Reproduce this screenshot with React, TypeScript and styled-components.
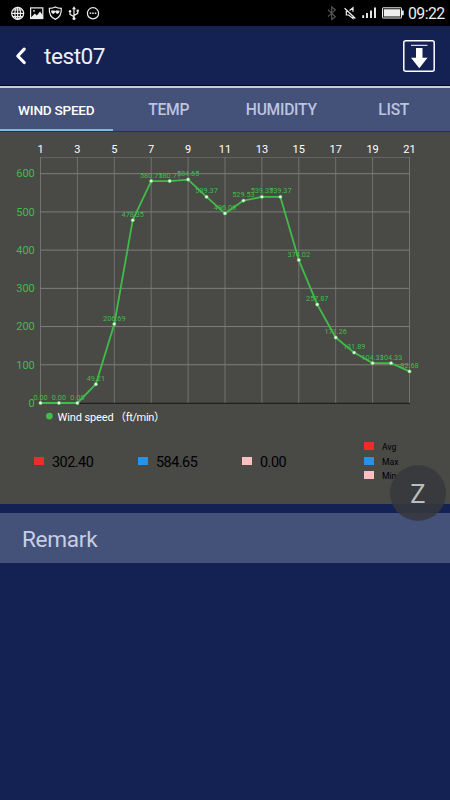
import React from 'react';
import styled, { createGlobalStyle } from 'styled-components';

const GlobalStyle = createGlobalStyle`
  * { box-sizing: border-box; }
  body { margin: 0; background: #142153; font-family: Roboto, sans-serif; }
`;

const Screen = styled.main`
  width: 450px;
  height: 800px;
  display: flex;
  flex-direction: column;
  overflow: hidden;
  background: #142153;
`;

const StatusBar = styled.div`
  height: 26px;
  flex: none;
  display: flex;
  align-items: center;
  justify-content: space-between;
  background: #000;
  color: #eee;
  padding: 0 7px 0 10px;
`;

const StatusGroup = styled.div<{ $gap: number }>`
  display: flex;
  align-items: center;
  gap: ${(p) => p.$gap}px;
  svg { display: block; }
`;

const Clock = styled.span`
  font-size: 15.8px;
  letter-spacing: -0.55px;
  line-height: 26px;
  padding-top: 1px;
  width: 35px;
  color: #eee;
  white-space: nowrap;
`;

const Header = styled.header`
  height: 60px;
  flex: none;
  display: flex;
  align-items: center;
  padding: 0 15px 0 14px;
  border-bottom: 1px solid #050812;
`;

const Title = styled.h1`
  flex: 1;
  margin: 3px 0 0 16px;
  font-size: 22.6px;
  letter-spacing: -0.45px;
  line-height: 30px;
  font-weight: 400;
  color: #eef0f8;
`;

const IconButton = styled.button`
  border: 0;
  padding: 0;
  background: none;
  svg { display: block; }
`;

const Tabs = styled.nav`
  display: grid;
  grid-template-columns: repeat(4, 1fr);
  flex: none;
  height: 46px;
  background: #445179;
  border-top: 2px solid #c9cde0;
  border-bottom: 1px solid #26305b;
`;

const Tab = styled.button<{ $active?: boolean }>`
  border: 0;
  border-bottom: 2px solid ${(p) => (p.$active ? '#7fbdd2' : 'transparent')};
  padding: 3px 0 0;
  background: none;
  font-family: inherit;
  font-weight: 500;
  font-size: ${(p) => (p.$active ? 13.6 : 15.6)}px;
  letter-spacing: ${(p) => (p.$active ? -0.25 : -0.25)}px;
  color: ${(p) => (p.$active ? '#fff' : '#bcc4df')};
  white-space: nowrap;
`;

const Panel = styled.section`
  height: 372px;
  flex: none;
  background: #494946;
`;

const ChartSvg = styled.svg`
  display: block;
  font-family: Roboto, sans-serif;
`;

const Summary = styled.div`
  display: grid;
  grid-template-columns: 104px 104px 122px 1fr;
  align-items: start;
  padding: 13px 0 0 34px;
  height: 70px;
`;

const Stat = styled.div`
  display: flex;
  align-items: center;
  height: 30px;
  margin-top: 7px;
  gap: 8px;
  font-size: 14.4px;
  letter-spacing: -0.5px;
  color: #000;
`;

const Swatch = styled.i<{ $color: string }>`
  width: 10px;
  height: 8px;
  flex: none;
  margin-top: -2px;
  background: ${(p) => p.$color};
`;

const Key = styled.div`
  display: flex;
  flex-direction: column;
`;

const KeyRow = styled.div`
  display: flex;
  align-items: center;
  height: 14.5px;
  gap: 8px;
  font-size: 8.6px;
  color: #000;
`;

const Remark = styled.section`
  flex: none;
  height: 50px;
  margin-top: 9px;
  padding: 2px 22px 0;
  display: flex;
  align-items: center;
  background: #445179;
  color: #c7cee5;
  font-size: 22.6px;
  letter-spacing: -0.3px;
`;

const Floating = styled.button`
  position: absolute;
  left: 390px;
  top: 465px;
  width: 56px;
  height: 56px;
  padding: 1px 0 0;
  border: 0;
  border-radius: 50%;
  background: rgba(54, 56, 61, 0.87);
  color: #bdbdbd;
  font: 400 25.5px Roboto, sans-serif;
`;

const speeds = [
  0, 0, 0, 49.21, 206.69, 478.35, 580.71, 580.71, 584.65, 539.37, 496.06,
  529.53, 539.37, 539.37, 374.02, 257.87, 171.26, 131.89, 104.33, 104.33, 82.68,
];
const px = (i: number) => 40.5 + i * 18.45;
const py = (v: number) => 271 - v * 0.3822;
const summary = [
  { color: '#ee2c2c', value: '302.40', label: 'Avg' },
  { color: '#2892e8', value: '584.65', label: 'Max' },
  { color: '#fdbfc1', value: '0.00', label: 'Min' },
];

function SpeedChart() {
  return (
    <ChartSvg width="450" height="295" viewBox="0 0 450 295">
      <g stroke="#858583" strokeWidth="0.9">
        <path d="M40 25.5H410" stroke="#686866" />
        {[100, 200, 300, 400, 500, 600].map((v) => (
          <line key={v} x1="40" x2="410" y1={py(v)} y2={py(v)} />
        ))}
        {Array.from({ length: 11 }, (_, i) => (
          <line key={i} x1={px(i * 2)} x2={px(i * 2)} y1="25" y2="271" stroke="#777775" />
        ))}
      </g>
      <path d="M40 271.3H410" stroke="#181818" strokeWidth="1" />
      <g fill="#fff" fontSize="11" textAnchor="middle">
        {Array.from({ length: 11 }, (_, i) => (
          <text key={i} x={px(i * 2)} y="21">{i * 2 + 1}</text>
        ))}
      </g>
      <g fill="#40bd48" fontSize="11" textAnchor="end">
        {[0, 100, 200, 300, 400, 500, 600].map((v) => (
          <text key={v} x="34.8" y={py(v) + 3.8}>{v}</text>
        ))}
      </g>
      <polyline
        points={speeds.map((v, i) => `${px(i)},${py(v)}`).join(' ')}
        fill="none" stroke="#40bd48" strokeWidth="1.8" strokeLinejoin="round"
      />
      <g fill="#40bd48" fontSize="7.3" textAnchor="middle">
        {speeds.map((v, i) => (
          <text key={i} x={px(i)} y={py(v) - 3.4}>{v.toFixed(2)}</text>
        ))}
      </g>
      {speeds.map((v, i) => (
        <circle key={i} cx={px(i)} cy={py(v)} r="1.7" fill="#e9ffe9" stroke="#40bd48" strokeWidth="0.5" />
      ))}
      <circle cx="49.4" cy="284.1" r="3.4" fill="#40bd48" />
      <text x="57.6" y="288.5" fill="#fff" fontSize="11" textLength="56">
        Wind speed
      </text>
      <text x="115" y="288.5" fill="#fff" fontSize="11" fontFamily="Roboto, 'Noto Sans CJK SC', sans-serif" textLength="50">
        （ft/min）
      </text>
    </ChartSvg>
  );
}

export default function App() {
  return (
    <Screen>
      <GlobalStyle />
      <StatusBar>
        <StatusGroup $gap={0}>
          <svg width="92" height="26" viewBox="10 0 92 26" fill="none" stroke="#eee" strokeWidth="1.2">
            <circle cx="17.7" cy="13.3" r="6" />
            <ellipse cx="17.7" cy="13.3" rx="2.8" ry="6" />
            <path d="M17.7 7.3v12M11.7 13.3h12M12.8 10h9.8M12.8 16.6h9.8" />
            <rect x="30.6" y="7.9" width="12.2" height="10.6" />
            <path d="M31 17.5l3.8-4 2 2 3.2-4 3 4v3H31z" fill="#eee" stroke="none" />
            <circle cx="34" cy="10.8" r="0.9" fill="#eee" stroke="none" />
            <path d="M55.3 6.9c2 1.2 4 1.4 6 1.4.3 5-.9 9-6 11.1-5.1-2.1-6.3-6.1-6-11.1 2 0 4-.2 6-1.4z" />
            <path d="M51.2 10.6h3.3l.8.7.8-.7h3.3v1.6l-1.5 1.5h-1.2l-1.4-1.7-1.4 1.7h-1.2l-1.5-1.5z" fill="#eee" stroke="none" />
            <path d="M74 8v11M74 16.8l-4-2.5v-3M74 15.5l3.7-2.2v-2.5" />
            <path d="M72 9.2l2-3 2 3z" fill="#eee" stroke="none" />
            <circle cx="74" cy="18.5" r="1.5" fill="#eee" stroke="none" />
            <circle cx="70" cy="11.2" r="1.2" fill="#eee" stroke="none" />
            <rect x="76.6" y="9.6" width="2.2" height="2.2" fill="#eee" stroke="none" />
            <circle cx="93" cy="13.3" r="5.6" />
            <path d="M89.7 13.3h1.5M92.2 13.3h1.5M94.8 13.3h1.5" strokeWidth="1.5" />
          </svg>
        </StatusGroup>
        <StatusGroup $gap={4}>
          <svg width="79" height="26" viewBox="326 0 79 26" fill="none" stroke="#eee" strokeWidth="1.2">
            <path d="M329 9.8l7.3 6.8-3.6 2.8V7.1l3.6 2.8-7.3 6.7" stroke="#555" />
            <path d="M350.5 10.5l3.5-2.8v4M354 15.5v3l-4.3-3.5h-2.4v-3.5h2M345.6 8.2l10.8 10.3" />
            <path d="M364.2 15.2V18M368 13v5M372 10.5V18M376 7.5V18" strokeWidth="1.9" />
            <rect x="383.5" y="7.8" width="19" height="10.2" rx="0.5" strokeWidth="1" />
            <path d="M384.8 9.2h16.4v7.4h-16.4zM403 10.5h1.7v4.8H403z" fill="#eee" stroke="none" />
          </svg>
          <Clock>09:22</Clock>
        </StatusGroup>
      </StatusBar>
      <Header>
        <IconButton aria-label="Back">
          <svg width="14" height="22" viewBox="0 0 14 22" fill="none" stroke="#fff" strokeWidth="3.2" strokeLinecap="round" strokeLinejoin="round">
            <path d="M10.2 4.2L3.8 11l6.4 6.5" />
          </svg>
        </IconButton>
        <Title>test07</Title>
        <IconButton aria-label="Download">
          <svg width="32" height="32" viewBox="0 0 32 32">
            <rect x="0.8" y="0.8" width="30.4" height="30.4" rx="2" fill="none" stroke="#fff" strokeWidth="1.5" />
            <path d="M8 5.3h16.5" stroke="#fff" strokeWidth="1" />
            <path d="M13 8h6.5v9.8h5L16.3 28.2 8 17.8h5z" fill="#fff" />
          </svg>
        </IconButton>
      </Header>
      <Tabs>
        <Tab $active>WIND SPEED</Tab>
        <Tab>TEMP</Tab>
        <Tab>HUMIDITY</Tab>
        <Tab>LIST</Tab>
      </Tabs>
      <Panel>
        <SpeedChart />
        <Summary>
          {summary.map((s) => (
            <Stat key={s.label}>
              <Swatch $color={s.color} />
              {s.value}
            </Stat>
          ))}
          <Key>
            {summary.map((s) => (
              <KeyRow key={s.label}>
                <Swatch $color={s.color} />
                {s.label}
              </KeyRow>
            ))}
          </Key>
        </Summary>
      </Panel>
      <Remark>Remark</Remark>
      <Floating>Z</Floating>
    </Screen>
  );
}
